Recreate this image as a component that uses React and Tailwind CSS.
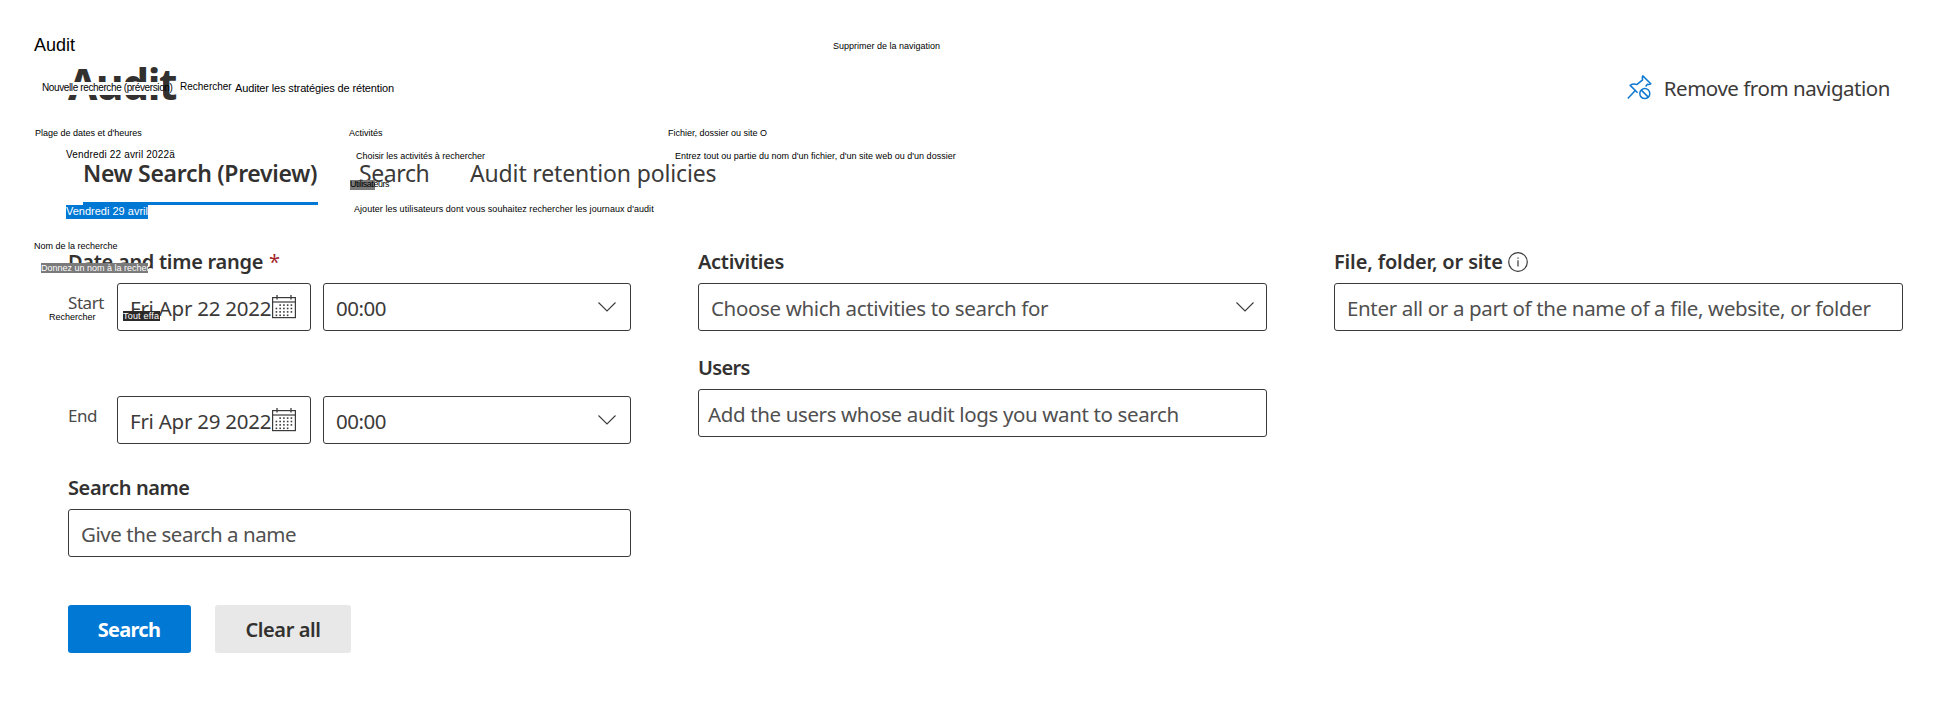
function Chevron({ className = "" }) {
  return (
    <svg width="18" height="10" viewBox="0 0 18 10" fill="none" stroke="#3b3a39" strokeWidth="1.1" className={`shrink-0 ${className}`}>
      <path d="M0.5 0.5 L9 9 L17.5 0.5" />
    </svg>
  );
}

function CalendarIcon() {
  const rows = [
    [1, 2, 3, 4],
    [0, 1, 2, 3, 4],
    [0, 1, 2, 3, 4],
    [0, 1, 2, 3],
  ];
  return (
    <svg width="24" height="24" viewBox="0 0 24 24" fill="none" stroke="#3b3a39" className="shrink-0">
      <rect x="0.6" y="2.6" width="22.8" height="20" strokeWidth="1.2" />
      <path d="M0.5 7 H23.5" strokeWidth="1.2" />
      <path d="M5 0 V4.6 M19 0 V4.6" strokeWidth="1.3" />
      {rows.map((cols, r) =>
        cols.map((c) => (
          <rect key={`${r}-${c}`} x={3.6 + c * 3.75} y={9.3 + r * 3.4} width="1.6" height="1.6" fill="#3b3a39" stroke="none" />
        ))
      )}
    </svg>
  );
}

function UnpinIcon() {
  return (
    <svg width="25" height="25" viewBox="0 0 25 25" fill="none" stroke="#0f78d0" strokeWidth="1.5" strokeLinejoin="round" className="shrink-0">
      <path d="M0.8 23.4 L7.8 15.9 M10.6 17.8 L3.2 10.4 C5.4 8.8 8 8.9 9.8 9.6 L15.6 4.8 C15.2 3.2 15.2 1.8 15.8 0.9 L23.8 8.8 C22.8 9.4 21.6 9.6 20.4 9.3 L18.6 11.4" />
      <circle cx="17.8" cy="18.6" r="5" />
      <path d="M14.3 15.1 L21.3 22.1" />
    </svg>
  );
}

function InfoIcon() {
  return (
    <svg width="20" height="20" viewBox="0 0 20 20" fill="none" stroke="#3b3a39" strokeWidth="1.2" className="ml-[5px] shrink-0">
      <circle cx="10" cy="10" r="9.3" />
      <path d="M10 8.2 V14.4 M10 5.4 V6.8" />
    </svg>
  );
}

function Label({ children, className = "" }) {
  return (
    <div className={`flex h-6 items-center pt-[2px] text-[20px] leading-6 font-semibold whitespace-nowrap text-[#323130] ${className}`}>
      {children}
    </div>
  );
}

function Box({ children, className = "" }) {
  return (
    <div className={`flex h-12 items-center rounded-[3px] border border-[#3b3a39] text-[20.5px] leading-6 whitespace-nowrap ${className}`}>
      {children}
    </div>
  );
}

function DateRow({ label, date, className = "" }) {
  return (
    <div className={`flex h-12 items-center ${className}`}>
      <span className="w-[49px] pb-2 text-[17px] leading-6 tracking-[-0.45px] text-[#4a4948]">{label}</span>
      <Box className="mr-3 w-[194px] justify-between pr-[14px] pl-3 text-[#3b3a39]">
        <span className="w-[142px] translate-y-px tracking-[-0.25px]">{date}</span>
        <CalendarIcon />
      </Box>
      <Box className="w-[308px] justify-between pr-[14px] pl-3 text-[#3b3a39]">
        <span className="translate-y-px tracking-[-0.5px]">00:00</span>
        <Chevron />
      </Box>
    </div>
  );
}

const note = "absolute leading-none whitespace-nowrap";

function Annotations() {
  return (
    <div className="text-black [font-family:'Liberation_Sans',Arial,sans-serif]">
      <span className={`${note} top-[36px] left-[34px] text-[18px]`}>Audit</span>
      <span className={`${note} top-[42px] left-[833px] text-[9px]`}>Supprimer de la navigation</span>
      <span className={`${note} top-[82px] left-[41px] h-[13px] w-[122px] bg-white`} />
      <span className={`${note} top-[83px] left-[42px] text-[10px] tracking-[-0.38px]`}>Nouvelle recherche (préversion)</span>
      <span className={`${note} top-[82px] left-[180px] text-[10px]`}>Rechercher</span>
      <span className={`${note} top-[83px] left-[235px] text-[11px] tracking-[-0.14px]`}>Auditer les stratégies de rétention</span>
      <span className={`${note} top-[129px] left-[35px] text-[9px]`}>Plage de dates et d'heures</span>
      <span className={`${note} top-[129px] left-[349px] text-[9px]`}>Activités</span>
      <span className={`${note} top-[129px] left-[668px] text-[9px]`}>Fichier, dossier ou site O</span>
      <span className={`${note} top-[150px] left-[66px] text-[10px] tracking-[0.17px]`}>Vendredi 22 avril 2022ä</span>
      <span className={`${note} top-[152px] left-[356px] text-[9px] tracking-[-0.03px]`}>Choisir les activités à rechercher</span>
      <span className={`${note} top-[152px] left-[675px] text-[9px] tracking-[0.02px]`}>Entrez tout ou partie du nom d'un fichier, d'un site web ou d'un dossier</span>
      <span className={`${note} top-[180px] left-[350px] h-[10px] w-[25px] bg-[#7a7a7a]`} />
      <span className={`${note} top-[180px] left-[350px] text-[9px] tracking-[-0.45px]`}>Utilisateurs</span>
      <span className={`${note} top-[205px] left-[354px] text-[9px] tracking-[0.05px]`}>Ajouter les utilisateurs dont vous souhaitez rechercher les journaux d'audit</span>
      <span className={`${note} top-[205px] left-[66px] h-[14px] w-[82px] bg-[#0078d4]`} />
      <span className={`${note} top-[206px] left-[66px] text-[11px] text-white`}>Vendredi 29 avril</span>
      <span className={`${note} top-[242px] left-[34px] text-[9px]`}>Nom de la recherche</span>
      <span className={`${note} top-[263px] left-[41px] h-[10px] w-[107px] bg-[#7a7a7a]`} />
      <span className={`${note} top-[264px] left-[41px] text-[9px] text-white`}>Donnez un nom à la recher-</span>
      <span className={`${note} top-[313px] left-[49px] text-[9px]`}>Rechercher</span>
      <span className={`${note} top-[311px] left-[123px] h-[10px] w-[37px] bg-[#2b2a29]`} />
      <span className={`${note} top-[312px] left-[123px] text-[9px] tracking-[0.2px] text-white`}>Tout effa</span>
    </div>
  );
}

export default function App() {
  return (
    <div className="relative h-[726px] w-[1958px] overflow-hidden bg-white pt-[63px] pl-[68px] text-[#323130] [font-family:'Noto_Sans','Open_Sans',sans-serif]">
      <header className="flex h-10 items-center justify-between pr-[68px]">
        <h1 className="pt-[2px] text-[42.5px] leading-10 font-bold tracking-[-1.4px]">Audit</h1>
        <button className="mt-[9px] flex items-center gap-3 text-[20.5px] leading-6 tracking-[-0.47px] text-[#3b3a39]">
          <UnpinIcon />
          Remove from navigation
        </button>
      </header>

      <nav className="mt-[41px] flex h-[61px] pl-[15px] text-[23px] leading-[58px] whitespace-nowrap text-[#3b3a39]">
        <span className="mr-[41px] w-[235px] border-b-[3px] border-[#0078d4] font-semibold tracking-[-0.31px] text-[#323130]">New Search (Preview)</span>
        <span className="w-[111px] tracking-[-0.4px]">Search</span>
        <span className="tracking-[-0.15px]">Audit retention policies</span>
      </nav>

      <main className="mt-11 grid grid-cols-[563px_569px_569px] items-start gap-x-[67px]">
        <section>
          <Label className="tracking-[-0.28px]">
            Date and time range<span className="ml-[6px] font-normal text-[#a4262c]">*</span>
          </Label>
          <DateRow label="Start" date="Fri Apr 22 2022" className="mt-[10px]" />
          <DateRow label="End" date="Fri Apr 29 2022" className="mt-[65px]" />
          <Label className="mt-[31px] tracking-[-0.4px]">Search name</Label>
          <Box className="mt-[10px] pl-3 text-[#505050]">
            <span className="translate-y-px tracking-[-0.45px]">Give the search a name</span>
          </Box>
          <div className="mt-12 flex gap-6 text-[20px]">
            <button className="h-12 w-[123px] rounded-[3px] bg-[#0078d4] pt-[2px] pr-px font-bold tracking-[-0.7px] text-white">Search</button>
            <button className="h-12 w-[136px] rounded-[3px] bg-[#e8e8e8] pt-[2px] font-semibold tracking-[-0.4px]">Clear all</button>
          </div>
        </section>

        <section>
          <Label className="tracking-[-0.32px]">Activities</Label>
          <Box className="mt-[10px] justify-between pr-3 pl-3 text-[#505050]">
            <span className="translate-y-px tracking-[-0.35px]">Choose which activities to search for</span>
            <Chevron />
          </Box>
          <Label className="mt-6 tracking-[-0.65px]">Users</Label>
          <Box className="mt-[10px] pl-[9px] text-[#505050]">
            <span className="translate-y-px tracking-[-0.37px]">Add the users whose audit logs you want to search</span>
          </Box>
        </section>

        <section>
          <Label className="tracking-[-0.15px]">
            File, folder, or site
            <InfoIcon />
          </Label>
          <Box className="mt-[10px] pl-3 text-[#505050]">
            <span className="translate-y-px tracking-[-0.35px]">Enter all or a part of the name of a file, website, or folder</span>
          </Box>
        </section>
      </main>

      <Annotations />
    </div>
  );
}
